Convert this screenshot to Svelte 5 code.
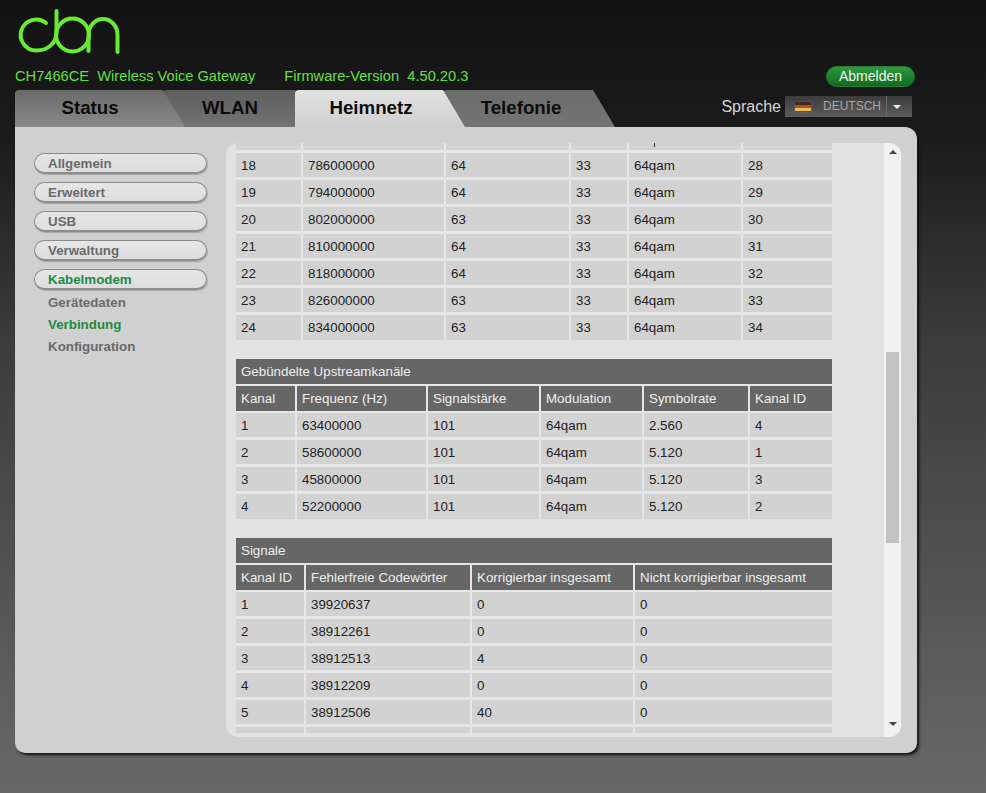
<script>
  const nav = ['Allgemein', 'Erweitert', 'USB', 'Verwaltung'];
  const sub = [['Gerätedaten', false], ['Verbindung', true], ['Konfiguration', false]];
  const down = [
    ['18', '786000000', '64', '33', '64qam', '28'],
    ['19', '794000000', '64', '33', '64qam', '29'],
    ['20', '802000000', '63', '33', '64qam', '30'],
    ['21', '810000000', '64', '33', '64qam', '31'],
    ['22', '818000000', '64', '33', '64qam', '32'],
    ['23', '826000000', '63', '33', '64qam', '33'],
    ['24', '834000000', '63', '33', '64qam', '34']
  ];
  const upHead = ['Kanal', 'Frequenz (Hz)', 'Signalstärke', 'Modulation', 'Symbolrate', 'Kanal ID'];
  const up = [
    ['1', '63400000', '101', '64qam', '2.560', '4'],
    ['2', '58600000', '101', '64qam', '5.120', '1'],
    ['3', '45800000', '101', '64qam', '5.120', '3'],
    ['4', '52200000', '101', '64qam', '5.120', '2']
  ];
  const sigHead = ['Kanal ID', 'Fehlerfreie Codewörter', 'Korrigierbar insgesamt', 'Nicht korrigierbar insgesamt'];
  const sig = [
    ['1', '39920637', '0', '0'],
    ['2', '38912261', '0', '0'],
    ['3', '38912513', '4', '0'],
    ['4', '38912209', '0', '0'],
    ['5', '38912506', '40', '0'],
    ['', '', '', '']
  ];
</script>

<div class="page">
  <header class="head">
    <svg class="logo" viewBox="15 5 110 50" width="110" height="50" aria-label="cbn">
      <g fill="none" stroke="#69ea33" stroke-width="4" stroke-linecap="round">
        <path d="M46 23 A15.500 15.500 0 1 0 36.500 50.500 C 48 50.500 56.500 43 56.500 32 L56.500 11" />
        <circle cx="72.500" cy="35" r="16.500" />
        <path d="M88.500 51 L88.500 35 A14.500 16 0 0 1 117.500 35 L117.500 52" />
      </g>
    </svg>
    <div class="line">
      <div class="model"><span>CH7466CE&nbsp; Wireless Voice Gateway</span><span class="fw">Firmware-Version&nbsp; 4.50.20.3</span></div>
      <button class="logout">Abmelden</button>
    </div>
    <div class="tabbar">
      <div class="tabs">
        <div class="tab t1">Status</div>
        <div class="tab t2">WLAN</div>
        <div class="tab t3">Heimnetz</div>
        <div class="tab t4">Telefonie</div>
      </div>
      <div class="lang">
        <span class="lang-label">Sprache</span>
        <div class="select">
          <span class="flag"><i></i><i></i><i></i></span>
          <span class="lang-name">DEUTSCH</span>
          <span class="caret"></span>
        </div>
      </div>
    </div>
  </header>

  <main class="panel">
    <nav class="side">
      {#each nav as n}
        <div class="pill">{n}</div>
      {/each}
      <div class="pill on">Kabelmodem</div>
      <div class="subs">
        {#each sub as [s, on]}
          <div class="sub" class:on>{s}</div>
        {/each}
      </div>
    </nav>
    <section class="view">
      <div class="scroll">
        <table class="t-down">
          <colgroup><col class="a1" /><col class="a2" /><col class="a3" /><col class="a4" /><col class="a5" /><col /></colgroup>
          <tbody>
            <tr class="cut"><td></td><td></td><td></td><td></td><td><span class="tick"></span></td><td></td></tr>
            {#each down as r}
              <tr>{#each r as c}<td>{c}</td>{/each}</tr>
            {/each}
          </tbody>
        </table>

        <table class="t-up">
          <colgroup><col class="b1" /><col class="b2" /><col class="b3" /><col class="b4" /><col class="b5" /><col /></colgroup>
          <thead>
            <tr><th class="title" colspan="6">Gebündelte Upstreamkanäle</th></tr>
            <tr>{#each upHead as h}<th>{h}</th>{/each}</tr>
          </thead>
          <tbody>
            {#each up as r}
              <tr>{#each r as c}<td>{c}</td>{/each}</tr>
            {/each}
          </tbody>
        </table>

        <table class="t-sig">
          <colgroup><col class="c1" /><col class="c2" /><col class="c3" /><col /></colgroup>
          <thead>
            <tr><th class="title" colspan="4">Signale</th></tr>
            <tr>{#each sigHead as h}<th>{h}</th>{/each}</tr>
          </thead>
          <tbody>
            {#each sig as r}
              <tr>{#each r as c}<td>{c}</td>{/each}</tr>
            {/each}
          </tbody>
        </table>
      </div>
      <div class="bar">
        <span class="arrow up"></span>
        <div class="thumb"></div>
        <span class="arrow dn"></span>
      </div>
    </section>
  </main>
</div>

<style>
  :global(body) {
    margin: 0;
    background: #666;
  }
  .page {
    width: 986px;
    height: 793px;
    box-sizing: border-box;
    padding: 0 0 0 15px;
    overflow: hidden;
    font-family: "Liberation Sans", Arial, sans-serif;
    background: linear-gradient(180deg, #131313 0, #1a1a1a 130px, #3a3a3a 330px, #525252 570px, #686868 793px);
  }
  .head {
    width: 902px;
  }
  .logo {
    display: block;
    margin-top: 5px;
  }
  .line {
    display: flex;
    justify-content: space-between;
    align-items: center;
    height: 22px;
    margin-top: 10px;
  }
  .model {
    color: #62e03e;
    font-size: 14.670px;
  }
  .fw {
    margin-left: 29px;
  }
  .logout {
    width: 89px;
    height: 21px;
    margin-right: 2px;
    padding: 0;
    border: 1px solid #2a7a36;
    border-radius: 11px;
    background: linear-gradient(180deg, #2c9a3c, #0f6a22);
    color: #f0f5ee;
    font: 14px "Liberation Sans", Arial, sans-serif;
  }
  .tabbar {
    display: flex;
    justify-content: space-between;
    align-items: flex-start;
    height: 37px;
    margin-top: 3px;
  }
  .tabs {
    display: flex;
    height: 37px;
  }
  .tab {
    height: 37px;
    box-sizing: border-box;
    padding-top: 7px;
    font-size: 18.700px;
    font-weight: bold;
    color: #0c0c0c;
    text-align: center;
    clip-path: polygon(0 0, calc(100% - 22px) 0, 100% 100%, 0 100%);
    border-top-left-radius: 4px;
    position: relative;
  }
  .t1 {
    width: 170px;
    padding-right: 20px;
    background: linear-gradient(180deg, #6a6a6a, #8a8a8a);
    z-index: 3;
    margin-right: -22px;
  }
  .t2 {
    width: 154px;
    padding-right: 20px;
    background: linear-gradient(180deg, #5e5e5e, #727272);
    z-index: 2;
  }
  .t3 {
    width: 170px;
    padding-right: 18px;
    background: linear-gradient(180deg, #e2e2e2, #cfcfcf);
    z-index: 4;
    margin-left: -22px;
  }
  .t4 {
    width: 172px;
    padding-right: 16px;
    margin-left: -22px;
    background: linear-gradient(180deg, #6c6c6c, #747474);
    z-index: 1;
  }
  .lang {
    display: flex;
    align-items: flex-start;
    margin-right: 5px;
    margin-top: 6px;
  }
  .lang-label {
    color: #d4d4d4;
    font-size: 16px;
    line-height: 22px;
    margin-right: 4px;
  }
  .select {
    display: flex;
    align-items: center;
    width: 127px;
    height: 21px;
    box-sizing: border-box;
    padding-left: 10px;
    background: linear-gradient(180deg, #3c3c3c, #5c5c5c);
    color: #a8a8a8;
    font-size: 12px;
  }
  .flag {
    display: flex;
    flex-direction: column;
    width: 16px;
    height: 10px;
    box-shadow: 0 0 1px #888;
  }
  .flag i {
    flex: 1;
  }
  .flag i:nth-child(1) { background: #3a2a20; }
  .flag i:nth-child(2) { background: #c8402a; }
  .flag i:nth-child(3) { background: #e8c050; }
  .lang-name {
    margin-left: 12px;
    width: 63px;
    border-right: 1px solid #6a6a6a;
    line-height: 21px;
    white-space: nowrap;
  }
  .caret {
    margin-left: 6px;
    border: 4px solid transparent;
    border-top: 4px solid #eee;
    border-bottom: 0;
  }
  .panel {
    display: flex;
    width: 902px;
    height: 626px;
    box-sizing: border-box;
    padding: 16px 16px 16px 0;
    background: #d0d0d0;
    border-radius: 0 12px 10px 10px;
    box-shadow: 2px 2px 3px #111;
  }
  .side {
    width: 211px;
    box-sizing: border-box;
    padding: 10px 0 0 19px;
    flex: none;
  }
  .pill {
    width: 173px;
    height: 21px;
    box-sizing: border-box;
    margin-bottom: 8px;
    padding-left: 13px;
    border: 1px solid #8c8c8c;
    border-bottom: 2px solid #8c8c8c;
    border-radius: 11px;
    background: linear-gradient(180deg, #e6e6e6, #dedede);
    box-shadow: 1px 1px 1px #a8a8a8;
    color: #6a6a6a;
    font-size: 13.330px;
    font-weight: bold;
    line-height: 19px;
  }
  .pill.on {
    color: #1f8a44;
    margin-bottom: 0;
  }
  .subs {
    padding: 2px 0 0 14px;
  }
  .sub {
    height: 22px;
    color: #6a6a6a;
    font-size: 13.330px;
    font-weight: bold;
    line-height: 22px;
  }
  .sub.on {
    color: #1f8a44;
  }
  .view {
    position: relative;
    width: 675px;
    height: 594px;
    background: #e2e2e2;
    border-radius: 12px;
    overflow: hidden;
  }
  .scroll {
    width: 596px;
    height: 590px;
    margin-left: 10px;
    overflow: hidden;
  }
  table {
    width: 596px;
    table-layout: fixed;
    border-collapse: separate;
    border-spacing: 0;
    font-size: 13.330px;
    color: #222;
  }
  td, th {
    height: 27px;
    padding: 0 0 0 5px;
    box-sizing: border-box;
    background: #d2d2d2;
    border-style: solid;
    border-color: #e6e6e6;
    border-width: 0 2px 3px 0;
    text-align: left;
    font-weight: normal;
    overflow: hidden;
    white-space: nowrap;
  }
  td:last-child, th:last-child {
    border-right: 0;
  }
  .cut td {
    height: 10px;
    line-height: 7px;
    position: relative;
  }
  .tick {
    position: absolute;
    left: 25px;
    top: 0;
    width: 1px;
    height: 4px;
    background: #333;
  }
  th {
    background: #666;
    color: #efefef;
    border-bottom-width: 2px;
  }
  tbody tr:last-child td {
    border-bottom: 0;
    height: 25px;
  }
  .t-down .a1 { width: 67px; }
  .t-down .a2 { width: 143px; }
  .t-down .a3 { width: 125px; }
  .t-down .a4 { width: 58px; }
  .t-down .a5 { width: 114px; }
  .t-up {
    margin-top: 19px;
  }
  .t-up .b1 { width: 61px; }
  .t-up .b2 { width: 131px; }
  .t-up .b3 { width: 113px; }
  .t-up .b4 { width: 103px; }
  .t-up .b5 { width: 106px; }
  .t-sig {
    margin-top: 19px;
  }
  .t-sig .c1 { width: 70px; }
  .t-sig .c2 { width: 166px; }
  .t-sig .c3 { width: 163px; }
  .t-sig tbody tr:last-child td {
    height: 6px;
  }
  .bar {
    position: absolute;
    right: 0;
    top: 0;
    bottom: 0;
    width: 17px;
    background: #f0f0f0;
  }
  .thumb {
    position: absolute;
    left: 2px;
    top: 209px;
    width: 13px;
    height: 191px;
    background: #c2c2c2;
  }
  .arrow {
    position: absolute;
    left: 5px;
    border: 4px solid transparent;
    border-top-width: 0;
    border-bottom: 4px solid #444;
  }
  .arrow.up { top: 7px; }
  .arrow.dn {
    bottom: 11px;
    border-bottom: 0;
    border-top: 4px solid #444;
  }
</style>
